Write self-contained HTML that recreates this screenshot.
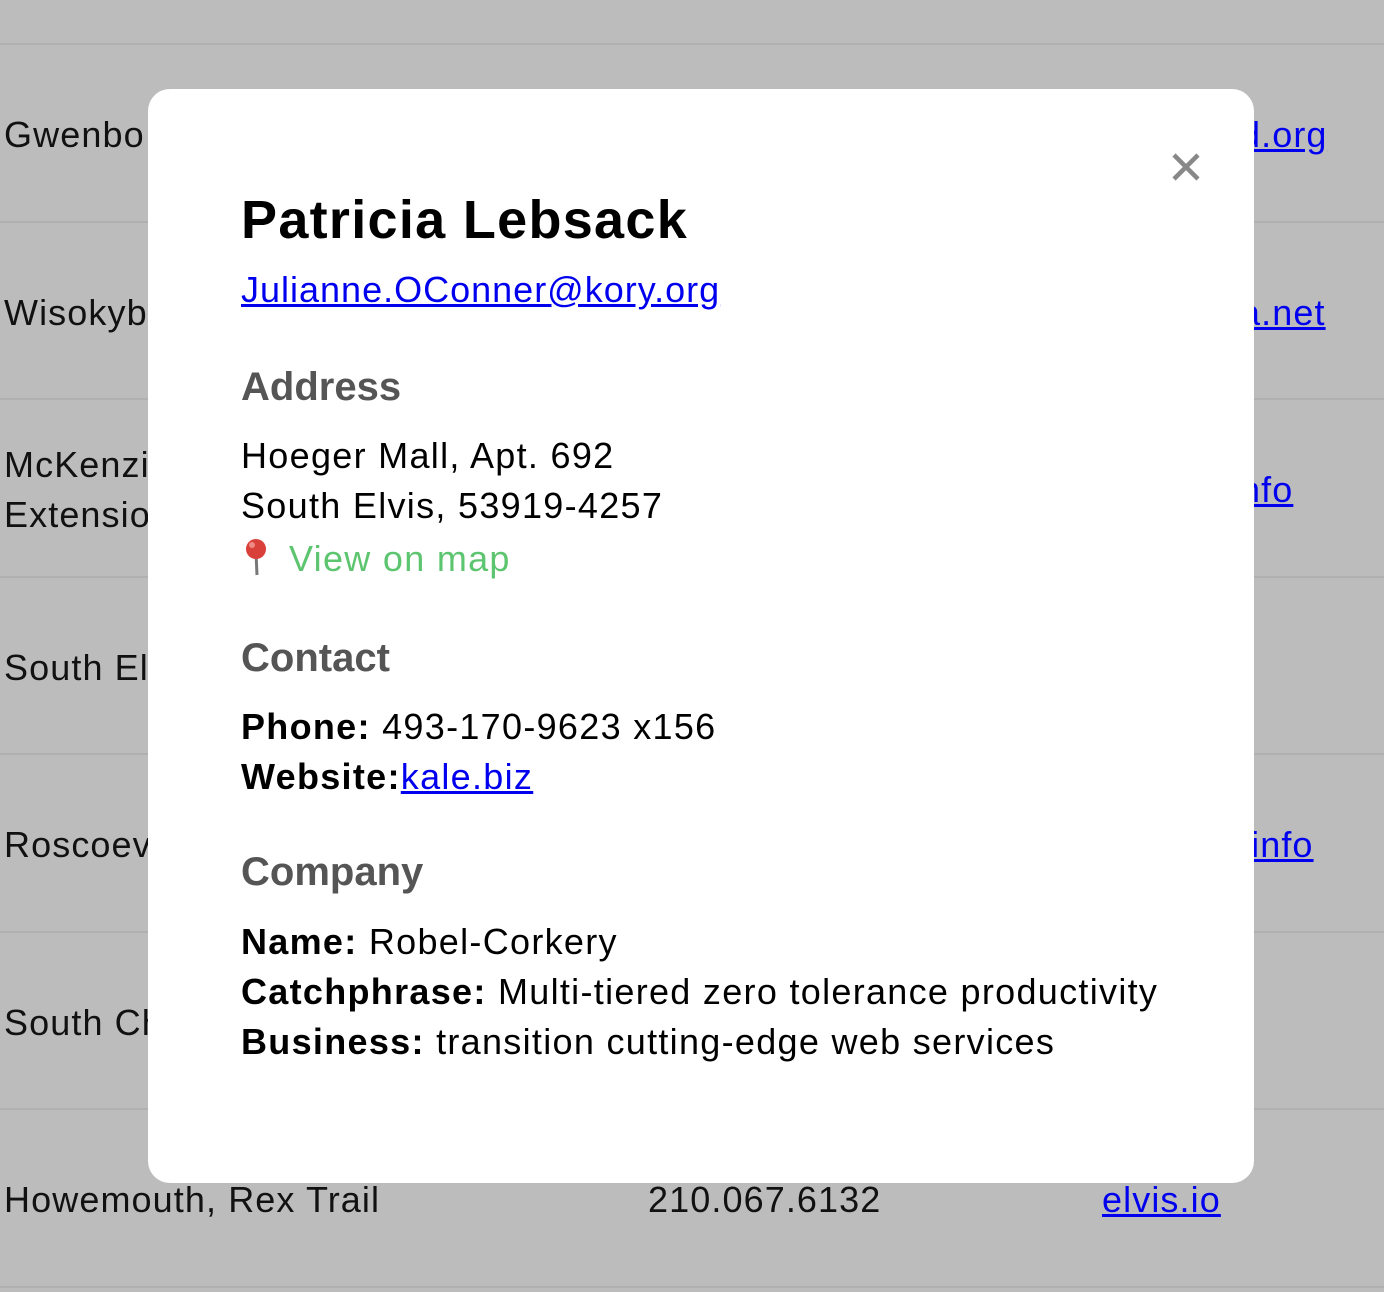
<!DOCTYPE html>
<html><head><style>
body{margin:0;width:1384px;height:1292px;background:#bcbcbc;font-family:"Liberation Sans",sans-serif;position:relative;overflow:hidden}
.line{position:absolute;left:0;width:1384px;height:2px;background:#b0b0b0}
.bt{position:absolute;font-size:36px;letter-spacing:1.1px;color:#111;line-height:50px;white-space:nowrap}
.bt a,.m a{color:#0000ee;text-decoration:underline}
.m{position:absolute;left:148px;top:89px;width:1106px;height:1094px;background:#fff;border-radius:22px}
.m .in{position:absolute;left:93px;top:0;right:0}
h1{position:absolute;margin:0;top:100px;font-size:54px;letter-spacing:1.3px;font-weight:bold;color:#000}
.t{position:absolute;font-size:36px;letter-spacing:1.3px;color:#000;white-space:nowrap}
h2{position:absolute;margin:0;font-size:40px;font-weight:bold;color:#555}
.x{position:absolute;left:1022px;top:62px;width:32px;height:32px}
</style></head><body>
<div class="line" style="top:43px"></div>
<div class="line" style="top:221px"></div>
<div class="line" style="top:398px"></div>
<div class="line" style="top:576px"></div>
<div class="line" style="top:753px"></div>
<div class="line" style="top:931px"></div>
<div class="line" style="top:1108px"></div>
<div class="line" style="top:1286px"></div>
<div class="bt" style="left:4px;top:110px">Gwenbo</div>
<div class="bt" style="left:4px;top:288px">Wisokyb</div>
<div class="bt" style="left:4px;top:440px">McKenzi<br>Extensio</div>
<div class="bt" style="left:4px;top:643px">South El</div>
<div class="bt" style="left:4px;top:820px">Roscoevi</div>
<div class="bt" style="left:4px;top:998px">South Ch</div>
<div class="bt" style="left:4px;top:1175px">Howemouth, Rex Trail</div>
<div class="bt" style="left:648px;top:1175px">210.067.6132</div>
<div class="bt" style="left:1102px;top:1175px"><a>elvis.io</a></div>
<div class="bt" style="left:1240px;top:110px"><a>d.org</a></div>
<div class="bt" style="left:1240px;top:288px"><a>a.net</a></div>
<div class="bt" style="left:1240px;top:465px"><a>nfo</a></div>
<div class="bt" style="left:1240px;top:820px"><a>.info</a></div>
<div class="m">
<svg class="x" viewBox="0 0 32 32"><path d="M4 4L28 28M28 4L4 28" stroke="#888" stroke-width="4.5"/></svg>
<div class="in">
<h1>Patricia Lebsack</h1>
<div class="t" style="top:180px;letter-spacing:1px"><a>Julianne.OConner@kory.org</a></div>
<h2 style="top:276px">Address</h2>
<div class="t" style="top:346px">Hoeger Mall, Apt. 692</div>
<div class="t" style="top:396px">South Elvis, 53919-4257</div>
<div class="t" style="top:448px;color:#5dc56f"><svg width="30" height="40" viewBox="0 0 30 40" style="vertical-align:-6px;margin-right:18px"><line x1="15" y1="16" x2="16" y2="38" stroke="#777" stroke-width="3"/><circle cx="15" cy="12" r="10" fill="#d9403a"/><circle cx="11" cy="8" r="3" fill="#f08a84"/></svg>View on map</div>
<h2 style="top:547px">Contact</h2>
<div class="t" style="top:617px"><b>Phone:</b> 493-170-9623 x156</div>
<div class="t" style="top:667px"><b>Website:</b><a>kale.biz</a></div>
<h2 style="top:761px">Company</h2>
<div class="t" style="top:832px"><b>Name:</b> Robel-Corkery</div>
<div class="t" style="top:882px"><b>Catchphrase:</b> Multi-tiered zero tolerance productivity</div>
<div class="t" style="top:932px"><b>Business:</b> transition cutting-edge web services</div>
</div></div>
</body></html>
